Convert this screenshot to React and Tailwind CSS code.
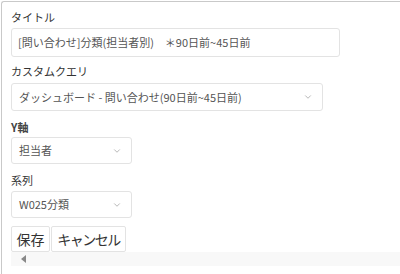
import { ChevronDown } from 'lucide-react';

const font = { fontFamily: '"Noto Sans CJK JP", "Noto Sans", sans-serif' };

function Label({ children, className = '' }) {
  return <div className={`h-[18px] leading-[18px] text-[11px] text-[#333] ${className}`}>{children}</div>;
}

function Select({ value, width, height }) {
  return (
    <div
      className={`${width} ${height} flex items-center justify-between border border-[#e3e3e3] rounded-[3px] bg-white pl-[7px] pr-[9px]`}
    >
      <span className="text-[11px] text-[#555] whitespace-nowrap">{value}</span>
      <ChevronDown size={10} strokeWidth={2} className="text-[#aaa]" />
    </div>
  );
}

export default function App() {
  return (
    <div className="w-[400px] h-[274px] bg-white pt-px pl-px overflow-hidden" style={font}>
      <div className="h-full border-l border-t border-[#c9c9c9] rounded-tl-[3px] pl-[9px] pt-[6px]">
        <Label className="mb-[2px]">タイトル</Label>
        <div className="w-[329px] h-[29px] flex items-center border border-[#e3e3e3] rounded-[3px] pl-[6px]">
          <span className="text-[11px] text-[#555] whitespace-nowrap">[問い合わせ]分類(担当者別)　＊90日前~45日前</span>
        </div>

        <Label className="mt-[5px] mb-[3px]">カスタムクエリ</Label>
        <Select value="ダッシュボード - 問い合わせ(90日前~45日前)" width="w-[312px]" height="h-[28px]" />

        <Label className="mt-[7px] mb-[1px] font-bold text-[#444]">Y軸</Label>
        <Select value="担当者" width="w-[121px]" height="h-[27px]" />

        <Label className="mt-[7px] mb-[2px]">系列</Label>
        <Select value="W025分類" width="w-[121px]" height="h-[27px]" />

        <div className="mt-[8px] flex gap-px">
          <button className="w-[39px] h-[26px] border border-[#e3e3e3] rounded-[2px] bg-white text-[14px] text-[#333] leading-none">
            保存
          </button>
          <button className="w-[75px] h-[26px] border border-[#e3e3e3] rounded-[2px] bg-white text-[14px] text-[#333] leading-none tracking-[-1.5px]">
            キャンセル
          </button>
        </div>

        <div className="h-[14px] bg-[#f8f8f8] flex items-center pl-[10px]">
          <div className="w-0 h-0 border-y-[4px] border-y-transparent border-r-[5px] border-r-[#888]" />
        </div>
      </div>
    </div>
  );
}
